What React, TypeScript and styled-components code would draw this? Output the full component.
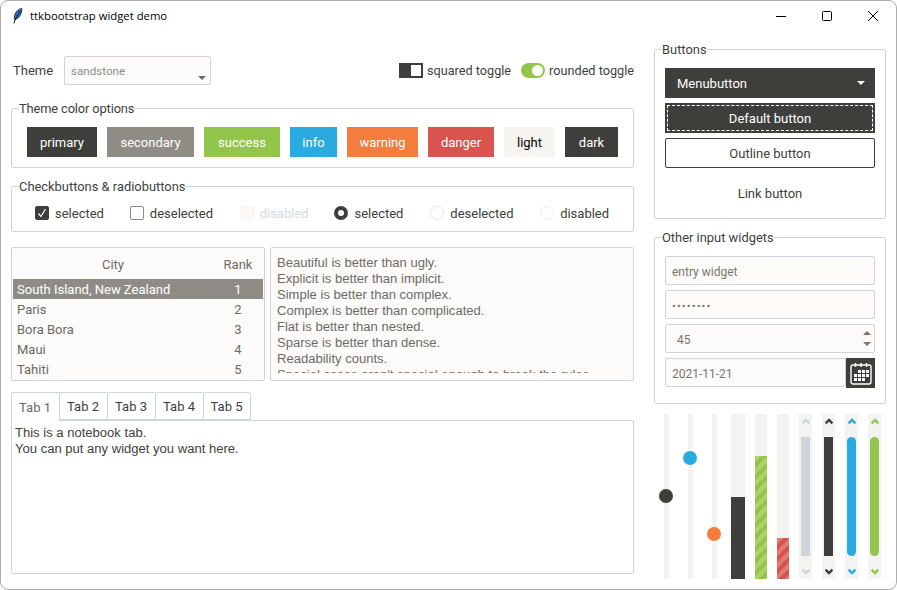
import styled, { createGlobalStyle } from "styled-components";

const colors = {
  primary: "#3e3f3a",
  secondary: "#8e8c84",
  success: "#93c54b",
  info: "#29abe0",
  warning: "#f47c3c",
  danger: "#d9534f",
  light: "#f8f5f0",
  dark: "#3e3f3a",
  border: "#ced4da",
  input: "#fdfbf9",
  trough: "#f3f3f1",
};

const GlobalStyle = createGlobalStyle`
  html, body {
    margin: 0;
    padding: 0;
    background: #ffffff;
  }
  * {
    box-sizing: border-box;
  }
`;

const Win = styled.div`
  width: 897px;
  height: 590px;
  overflow: hidden;
  background: #ffffff;
  border: 1px solid #adadad;
  border-radius: 8px;
  color: ${colors.dark};
  font-family: Roboto, sans-serif;
  font-size: 13px;
  line-height: 16px;
`;

const TitleBar = styled.div`
  display: flex;
  align-items: center;
  height: 30px;
  padding-left: 11px;
`;

const Title = styled.span`
  flex: 1;
  margin-left: 7px;
  font-family: "Open Sans", sans-serif;
  font-size: 11.3px;
  color: #000000;
`;

const WinButton = styled.div`
  display: flex;
  align-items: center;
  justify-content: center;
  width: 46px;
  height: 30px;
`;

const Main = styled.div`
  display: flex;
  gap: 20px;
  padding-left: 10px;
`;

const LeftColumn = styled.div`
  display: flex;
  flex-direction: column;
  width: 623px;
  padding-top: 25px;
`;

const RightColumn = styled.div`
  display: flex;
  flex-direction: column;
  width: 232px;
  padding-top: 10px;
`;

const ThemeRow = styled.div`
  display: flex;
  align-items: center;
  height: 29px;
  margin-bottom: 15px;
`;

const ThemeLabel = styled.span`
  width: 53px;
  padding-left: 2px;
`;

const Combo = styled.div`
  position: relative;
  width: 147px;
  height: 29px;
  padding: 6px 6px;
  border: 1px solid ${colors.border};
  border-radius: 2px;
  background: ${colors.input};
  color: ${colors.secondary};
  font-size: 11.6px;
`;

const ComboArrow = styled.span`
  position: absolute;
  right: 4px;
  bottom: 4px;
  border-left: 4px solid transparent;
  border-right: 4px solid transparent;
  border-top: 4px solid #6b6a65;
`;

const Toggles = styled.div`
  display: flex;
  align-items: center;
  margin-left: auto;
  height: 29px;
  padding-bottom: 1px;
  font-size: 12.7px;
`;

const ToggleLabel = styled.span<{ $last?: boolean }>`
  margin-left: 4px;
  padding-top: 2px;
  margin-right: ${(p) => (p.$last ? "0" : "10px")};
`;

const SquareToggle = styled.span`
  display: flex;
  justify-content: flex-end;
  width: 24px;
  height: 15px;
  padding: 2px;
  background: ${colors.dark};
`;

const SquareKnob = styled.span`
  width: 10px;
  height: 11px;
  background: #ffffff;
`;

const RoundToggle = styled.span`
  display: flex;
  justify-content: flex-end;
  align-items: center;
  width: 24px;
  height: 15px;
  padding: 2px;
  border-radius: 8px;
  background: ${colors.success};
`;

const RoundKnob = styled.span`
  width: 11px;
  height: 11px;
  border-radius: 50%;
  background: #ffffff;
`;

const Frame = styled.fieldset<{ $spaced?: boolean }>`
  margin: ${(p) => (p.$spaced ? "10px 0 0" : "0")};
  min-width: 0;
  padding: 0;
  border: 1px solid ${colors.border};
  border-radius: 2px;
`;

const Legend = styled.legend<{ $tight?: boolean }>`
  margin-left: 7px;
  padding: 0;
  height: 16px;
  line-height: 18px;
  font-size: 12.9px;
  letter-spacing: ${(p) => (p.$tight ? "-0.15px" : "0")};
`;

const FrameBody = styled.div<{ $pad: string }>`
  padding: ${(p) => p.$pad};
`;

const ColorRow = styled.div`
  display: flex;
  gap: 10px;
`;

const ColorButton = styled.div<{ $bg: string; $w: number; $dark?: boolean }>`
  display: flex;
  align-items: center;
  justify-content: center;
  width: ${(p) => p.$w}px;
  height: 30px;
  padding-top: 2px;
  background: ${(p) => p.$bg};
  color: ${(p) => (p.$dark ? "#000000" : "#ffffff")};
`;

const CheckRow = styled.div`
  display: flex;
  align-items: center;
  height: 18px;
`;

const CheckItem = styled.div<{ $w: number; $muted?: boolean }>`
  display: flex;
  align-items: center;
  gap: 6px;
  width: ${(p) => p.$w}px;
  color: ${(p) => (p.$muted ? "#d6d9dd" : colors.dark)};
`;

const CheckText = styled.span`
  padding-top: 2px;
`;

const CheckBox = styled.span<{ $on?: boolean; $off?: boolean }>`
  display: flex;
  align-items: center;
  justify-content: center;
  width: ${(p) => (p.$off ? 13 : 14)}px;
  height: 14px;
  border-radius: 2px;
  border: 1px solid ${(p) => (p.$on ? colors.dark : p.$off ? "#f7f5f1" : "#8e8c84")};
  background: ${(p) => (p.$on ? colors.dark : p.$off ? "#fbf9f6" : "#ffffff")};
`;

const Radio = styled.span<{ $on?: boolean; $off?: boolean }>`
  width: 14px;
  height: 14px;
  border-radius: 50%;
  border: ${(p) => (p.$on ? `4px solid ${colors.dark}` : `1px solid ${p.$off ? "#f0efec" : "#e3e3e3"}`)};
  background: #ffffff;
`;

const DataRow = styled.div`
  display: flex;
  gap: 5px;
  height: 134px;
  margin-top: 15px;
`;

const Tree = styled.div`
  width: 254px;
  height: 134px;
  padding: 0 1px;
  overflow: hidden;
  border: 1px solid ${colors.border};
  border-radius: 2px;
  background: ${colors.input};
  color: #6b6a65;
`;

const TreeHead = styled.div`
  display: grid;
  grid-template-columns: 200px 50px;
  align-items: center;
  height: 31px;
  padding-top: 2px;
  text-align: center;
`;

const TreeLine = styled.div<{ $sel?: boolean }>`
  display: grid;
  grid-template-columns: 196px 50px;
  align-items: center;
  height: 20px;
  padding: 2px 0 0 4px;
  background: ${(p) => (p.$sel ? colors.secondary : "transparent")};
  color: ${(p) => (p.$sel ? "#ffffff" : "#6b6a65")};
`;

const Rank = styled.span`
  text-align: center;
`;

const ZenBox = styled.div`
  flex: 1;
  height: 134px;
  padding: 7px 6px 7px;
  border: 1px solid ${colors.border};
  border-radius: 2px;
  background: ${colors.input};
  color: #6b6a65;
  font-family: "Liberation Sans", sans-serif;
  font-size: 13.05px;
`;

const ZenClip = styled.div`
  height: 118px;
  overflow: hidden;
  white-space: nowrap;
`;

const TabStrip = styled.div`
  display: flex;
  margin-top: 11px;
  height: 29px;
`;

const Tab = styled.div<{ $active?: boolean; $narrow?: boolean }>`
  position: relative;
  z-index: ${(p) => (p.$active ? 1 : 0)};
  display: flex;
  align-items: center;
  justify-content: center;
  width: ${(p) => (p.$narrow ? 48 : 49)}px;
  padding: 2px 1px 0 0;
  margin-left: ${(p) => (p.$active ? "0" : "-1px")};
  height: ${(p) => (p.$active ? "29px" : "28px")};
  border: 1px solid ${colors.border};
  border-bottom: ${(p) => (p.$active ? "none" : `1px solid ${colors.border}`)};
  border-radius: 2px 2px 0 0;
  background: #ffffff;
  color: ${(p) => (p.$active ? "#6b6a65" : colors.dark)};
`;

const TabPanel = styled.div`
  height: 154px;
  margin-top: -1px;
  padding: 4px 3px;
  border: 1px solid ${colors.border};
  border-radius: 0 0 2px 2px;
  font-family: "Liberation Sans", sans-serif;
  font-size: 13.05px;
`;

const ButtonStack = styled.div`
  display: flex;
  flex-direction: column;
  gap: 5px;
`;

const MenuButton = styled.div`
  display: flex;
  align-items: center;
  justify-content: space-between;
  height: 30px;
  padding: 2px 10px 0 12px;
  background: ${colors.dark};
  color: #ffffff;
`;

const MenuArrow = styled.span`
  margin-bottom: 2px;
  border-left: 4px solid transparent;
  border-right: 4px solid transparent;
  border-top: 4px solid #ffffff;
`;

const DefaultButton = styled.div`
  display: flex;
  align-items: center;
  justify-content: center;
  height: 30px;
  background: ${colors.dark};
  color: #ffffff;
  padding: 2px;

  span {
    display: flex;
    align-items: center;
    justify-content: center;
    width: 100%;
    height: 100%;
    padding-top: 2px;
    border: 1px dashed #ffffff;
  }
`;

const OutlineButton = styled.div`
  display: flex;
  align-items: center;
  justify-content: center;
  height: 30px;
  padding-top: 2px;
  border: 1px solid ${colors.dark};
  border-radius: 2px;
`;

const LinkButton = styled.div`
  display: flex;
  align-items: center;
  justify-content: center;
  height: 30px;
  padding-top: 2px;
  margin-top: 5px;
`;

const Field = styled.div<{ $w?: number }>`
  position: relative;
  display: flex;
  align-items: center;
  width: ${(p) => (p.$w ? `${p.$w}px` : "100%")};
  height: 29px;
  padding: 2px 0 0 6px;
  border: 1px solid ${colors.border};
  border-radius: 2px;
  background: ${colors.input};
  color: #77756f;
  font-size: 12px;
`;

const PasswordDots = styled.span`
  font-size: 11.5px;
  letter-spacing: 1.05px;
`;

const SpinText = styled.span`
  margin-left: 5px;
`;

const SpinUp = styled.span`
  position: absolute;
  right: 3px;
  top: 6px;
  border-left: 4px solid transparent;
  border-right: 4px solid transparent;
  border-bottom: 4px solid #77756f;
`;

const SpinDown = styled.span`
  position: absolute;
  right: 3px;
  bottom: 6px;
  border-left: 4px solid transparent;
  border-right: 4px solid transparent;
  border-top: 4px solid #77756f;
`;

const DateRow = styled.div`
  display: flex;
  align-items: flex-start;
`;

const DateButton = styled.div`
  display: flex;
  align-items: center;
  justify-content: center;
  width: 29px;
  height: 30px;
  background: ${colors.dark};
`;

const Gauges = styled.div`
  display: flex;
  gap: 10px;
  height: 165px;
  margin-top: 10px;
  padding-left: 5px;
`;

const ScaleSlot = styled.div`
  position: relative;
  display: flex;
  justify-content: center;
  width: 14px;
`;

const ScaleTrack = styled.div`
  width: 5px;
  background: ${colors.trough};
`;

const Knob = styled.div<{ $top: number; $bg: string }>`
  position: absolute;
  left: 0;
  top: ${(p) => p.$top}px;
  width: 14px;
  height: 14px;
  border-radius: 50%;
  background: ${(p) => p.$bg};
`;

const Meter = styled.div<{ $w: number }>`
  display: flex;
  flex-direction: column;
  justify-content: flex-end;
  width: ${(p) => p.$w}px;
  background: ${colors.trough};
`;

const MeterFill = styled.div<{ $h: number; $bg: string; $stripe?: string }>`
  height: ${(p) => p.$h}px;
  background-color: ${(p) => p.$bg};
  background-image: ${(p) =>
    p.$stripe
      ? `repeating-linear-gradient(135deg, ${p.$stripe} 0 4.25px, transparent 4.25px 8.5px)`
      : "none"};
`;

const Scrollbar = styled.div`
  display: flex;
  flex-direction: column;
  align-items: center;
  justify-content: space-between;
  width: 13px;
  padding: 4px 0;
  background: ${colors.trough};
`;

const Thumb = styled.div<{ $bg: string; $round?: boolean }>`
  width: 9px;
  height: 119px;
  background: ${(p) => p.$bg};
  border-radius: ${(p) => (p.$round ? "5px" : "0")};
`;

const Chevron = ({ color, down }: { color: string; down?: boolean }) => (
  <svg width="8" height="7" viewBox="0 0 8 7">
    <path
      d={down ? "M0.6 1.6 L4 5 L7.4 1.6" : "M0.6 5.400 L4 2 L7.4 5.400"}
      fill="none"
      stroke={color}
      strokeWidth="2.400"
    />
  </svg>
);

const Feather = () => (
  <svg width="11" height="16" viewBox="0 0 11 16">
    <path
      d="M9.800 0.500 C6.500 1 3.800 3.500 2.800 7 C2.300 8.800 2.300 10.200 2.500 11.500 C5.500 11 8 8.500 9 5.500 C9.600 3.800 9.900 2 9.800 0.500 Z"
      fill="#2f78c9"
      stroke="#10233f"
      strokeWidth="0.900"
    />
    <path d="M8.300 3 C6 6 3.600 10 1.800 15.500" fill="none" stroke="#0b1220" strokeWidth="1" />
  </svg>
);

const CalendarIcon = () => (
  <svg width="22" height="23" viewBox="0 0 22 23">
    <rect x="1" y="3" width="20" height="19" rx="2" fill="none" stroke="#ffffff" strokeWidth="1.400" />
    <path d="M5.500 1 V5 M11 1 V5 M16.500 1 V5" stroke="#ffffff" strokeWidth="1.400" />
    <path
      d="M8 8h3v3h-3z M12 8h3v3h-3z M16 8h3v3h-3z M4 12h3v3h-3z M8 12h3v3h-3z M12 12h3v3h-3z M16 12h3v3h-3z M4 16h3v3h-3z M8 16h3v3h-3z M12 16h3v3h-3z"
      fill="#ffffff"
    />
  </svg>
);

const themeButtons = [
  { label: "primary", bg: colors.primary, w: 70 },
  { label: "secondary", bg: colors.secondary, w: 87 },
  { label: "success", bg: colors.success, w: 76 },
  { label: "info", bg: colors.info, w: 47 },
  { label: "warning", bg: colors.warning, w: 71 },
  { label: "danger", bg: colors.danger, w: 66 },
  { label: "light", bg: colors.light, w: 51, dark: true },
  { label: "dark", bg: colors.dark, w: 53 },
];

const cities = [
  ["South Island, New Zealand", "1"],
  ["Paris", "2"],
  ["Bora Bora", "3"],
  ["Maui", "4"],
  ["Tahiti", "5"],
];

const zen = [
  "Beautiful is better than ugly.",
  "Explicit is better than implicit.",
  "Simple is better than complex.",
  "Complex is better than complicated.",
  "Flat is better than nested.",
  "Sparse is better than dense.",
  "Readability counts.",
  "Special cases aren't special enough to break the rules.",
];

const scrollbars = [
  { color: colors.border, round: false },
  { color: colors.dark, round: false },
  { color: colors.info, round: true },
  { color: colors.success, round: true },
];

export default function App() {
  return (
    <Win>
      <GlobalStyle />
      <TitleBar>
        <Feather />
        <Title>ttkbootstrap widget demo</Title>
        <WinButton>
          <svg width="10" height="10" viewBox="0 0 10 10">
            <path d="M0 5.500 H10" stroke="#000000" strokeWidth="1" />
          </svg>
        </WinButton>
        <WinButton>
          <svg width="10" height="10" viewBox="0 0 10 10">
            <rect x="0.500" y="0.500" width="9" height="9" rx="1" fill="none" stroke="#000000" strokeWidth="1" />
          </svg>
        </WinButton>
        <WinButton>
          <svg width="10" height="10" viewBox="0 0 10 10">
            <path d="M0 0 L10 10 M10 0 L0 10" stroke="#000000" strokeWidth="1" />
          </svg>
        </WinButton>
      </TitleBar>
      <Main>
        <LeftColumn>
          <ThemeRow>
            <ThemeLabel>Theme</ThemeLabel>
            <Combo>
              sandstone
              <ComboArrow />
            </Combo>
            <Toggles>
              <SquareToggle>
                <SquareKnob />
              </SquareToggle>
              <ToggleLabel>squared toggle</ToggleLabel>
              <RoundToggle>
                <RoundKnob />
              </RoundToggle>
              <ToggleLabel $last>rounded toggle</ToggleLabel>
            </Toggles>
          </ThemeRow>

          <Frame>
            <Legend $tight>Theme color options</Legend>
            <FrameBody $pad="11px 15px 10px">
              <ColorRow>
                {themeButtons.map((b) => (
                  <ColorButton key={b.label} $bg={b.bg} $w={b.w} $dark={b.dark}>
                    {b.label}
                  </ColorButton>
                ))}
              </ColorRow>
            </FrameBody>
          </Frame>

          <Frame $spaced>
            <Legend>Checkbuttons &amp; radiobuttons</Legend>
            <FrameBody $pad="10px 23px 9px">
              <CheckRow>
                <CheckItem $w={95}>
                  <CheckBox $on>
                    <svg width="10" height="10" viewBox="0 0 10 10">
                      <path d="M1.500 5.500 L4 8.500 L8.500 1" fill="none" stroke="#ffffff" strokeWidth="1.200" />
                    </svg>
                  </CheckBox>
                  <CheckText>selected</CheckText>
                </CheckItem>
                <CheckItem $w={111}>
                  <CheckBox />
                  <CheckText>deselected</CheckText>
                </CheckItem>
                <CheckItem $w={94} $muted>
                  <CheckBox $off />
                  <CheckText>disabled</CheckText>
                </CheckItem>
                <CheckItem $w={96}>
                  <Radio $on />
                  <CheckText>selected</CheckText>
                </CheckItem>
                <CheckItem $w={110}>
                  <Radio />
                  <CheckText>deselected</CheckText>
                </CheckItem>
                <CheckItem $w={70}>
                  <Radio $off />
                  <CheckText>disabled</CheckText>
                </CheckItem>
              </CheckRow>
            </FrameBody>
          </Frame>

          <DataRow>
            <Tree>
              <TreeHead>
                <span>City</span>
                <span>Rank</span>
              </TreeHead>
              {cities.map(([city, rank], i) => (
                <TreeLine key={city} $sel={i === 0}>
                  <span>{city}</span>
                  <Rank>{rank}</Rank>
                </TreeLine>
              ))}
            </Tree>
            <ZenBox>
              <ZenClip>
                {zen.map((line) => (
                  <div key={line}>{line}</div>
                ))}
              </ZenClip>
            </ZenBox>
          </DataRow>

          <TabStrip>
            <Tab $active>Tab 1</Tab>
            <Tab>Tab 2</Tab>
            <Tab>Tab 3</Tab>
            <Tab>Tab 4</Tab>
            <Tab $narrow>Tab 5</Tab>
          </TabStrip>
          <TabPanel>
            This is a notebook tab.
            <br />
            You can put any widget you want here.
          </TabPanel>
        </LeftColumn>

        <RightColumn>
          <Frame>
            <Legend>Buttons</Legend>
            <FrameBody $pad="11px 10px 10px">
              <ButtonStack>
                <MenuButton>
                  Menubutton
                  <MenuArrow />
                </MenuButton>
                <DefaultButton>
                  <span>Default button</span>
                </DefaultButton>
                <OutlineButton>Outline button</OutlineButton>
                <LinkButton>Link button</LinkButton>
              </ButtonStack>
            </FrameBody>
          </Frame>

          <Frame $spaced>
            <Legend>Other input widgets</Legend>
            <FrameBody $pad="11px 10px 15px">
              <ButtonStack>
                <Field>entry widget</Field>
                <Field>
                  <PasswordDots>••••••••</PasswordDots>
                </Field>
                <Field>
                  <SpinText>45</SpinText>
                  <SpinUp />
                  <SpinDown />
                </Field>
                <DateRow>
                  <Field $w={181}>2021-11-21</Field>
                  <DateButton>
                    <CalendarIcon />
                  </DateButton>
                </DateRow>
              </ButtonStack>
            </FrameBody>
          </Frame>

          <Gauges>
            <ScaleSlot>
              <ScaleTrack />
              <Knob $top={75} $bg={colors.dark} />
            </ScaleSlot>
            <ScaleSlot>
              <ScaleTrack />
              <Knob $top={37} $bg={colors.info} />
            </ScaleSlot>
            <ScaleSlot>
              <ScaleTrack />
              <Knob $top={113} $bg={colors.warning} />
            </ScaleSlot>
            <Meter $w={14}>
              <MeterFill $h={82} $bg={colors.dark} />
            </Meter>
            <Meter $w={12}>
              <MeterFill $h={123} $bg={colors.success} $stripe="#a9d36c" />
            </Meter>
            <Meter $w={12}>
              <MeterFill $h={41} $bg={colors.danger} $stripe="#e27a76" />
            </Meter>
            {scrollbars.map((s) => (
              <Scrollbar key={s.color}>
                <Chevron color={s.color} />
                <Thumb $bg={s.color} $round={s.round} />
                <Chevron color={s.color} down />
              </Scrollbar>
            ))}
          </Gauges>
        </RightColumn>
      </Main>
    </Win>
  );
}
